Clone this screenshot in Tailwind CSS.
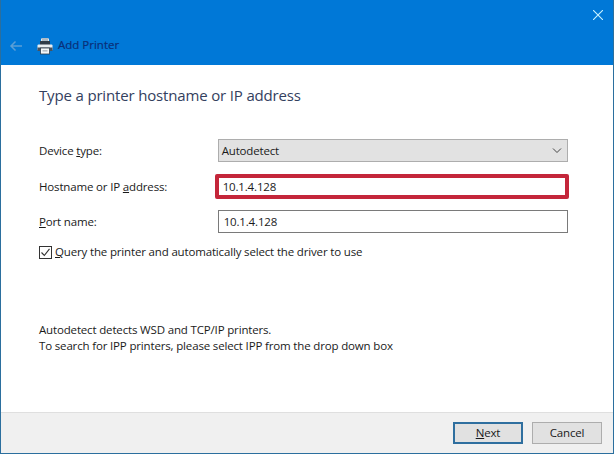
<!DOCTYPE html>
<html>
<head>
<meta charset="utf-8">
<script src="https://cdn.jsdelivr.net/npm/@tailwindcss/browser@4"></script>
</head>
<body class="m-0">
<div class="w-[614px] h-[454px] flex flex-col overflow-hidden bg-white font-['Open_Sans',sans-serif] text-[11.5px] tracking-[-0.16px] text-[#1a1a1a] border-x border-b border-[#2b6f9e]">
  <header class="h-[65px] shrink-0 bg-[#0078d7] relative flex items-end pb-[10px] -mx-px">
    <svg class="ml-[9px] w-[13px] h-[12px] mb-[3px]" viewBox="0 0 13 12" fill="none" stroke="#5b9fd6" stroke-width="1.5"><path d="M13 6H2M6.500 1.500L2 6l4.500 4.500"/></svg>
    <svg class="ml-[15px] w-[16px] h-[17px]" viewBox="0 0 16 17">
      <rect x="4" y="0.500" width="8" height="6" fill="#dfe7ee"/>
      <rect x="5" y="0" width="6" height="3" fill="#aebbc6"/>
      <rect x="3" y="3" width="10" height="4" fill="#2f3b48"/>
      <rect x="0.500" y="6.500" width="15" height="6" rx="1" fill="#e9eef2"/>
      <rect x="0.500" y="9.500" width="15" height="3.500" fill="#47535f"/>
      <rect x="3.500" y="10" width="9" height="6" fill="#f4f7f9" stroke="#2f3b48" stroke-width="0.800"/>
      <rect x="5.500" y="12.500" width="5" height="0.800" fill="#7a8792"/>
    </svg>
    <span class="ml-[5px] mb-[1px] text-[#0a2f78] text-[11.500px] tracking-[0] [-webkit-text-stroke:0.2px_#0a2f78] leading-[18px]">Add Printer</span>
    <svg class="absolute right-[11px] top-[10px] w-[10px] h-[10px]" viewBox="0 0 10 10" stroke="#c8f2ff" stroke-width="1.100"><path d="M0 0L10 10M10 0L0 10"/></svg>
  </header>
  <main class="flex-1 flex flex-col pl-[38px] pr-[45px]">
    <h1 class="mt-[20px] h-[21px] text-[15px] leading-[21px] font-normal text-[#33405e]">Type a printer hostname or IP address</h1>
    <div class="mt-[33px] flex items-center h-[23px]">
      <span class="w-[179px]">Device <u>t</u>ype:</span>
      <div class="w-[351px] h-[23px] flex items-center justify-between pl-[3px] pr-[5px] bg-[#e2e2e2] border border-[#adadad]">
        <span>Autodetect</span>
        <svg class="w-[10px] h-[6px]" viewBox="0 0 10 6" fill="none" stroke="#444" stroke-width="1"><path d="M1 0.500L5 4.500L9 0.500"/></svg>
      </div>
    </div>
    <div class="mt-[13px] flex items-center h-[23px]">
      <span class="w-[179px]">Hostname or IP <u>a</u>ddress:</span>
      <div class="relative w-[351px] h-[23px] flex items-center pl-[5px] bg-white">
        <span>10.1.4.128</span>
        <div class="absolute -left-[3px] -right-px -top-px -bottom-px border-4 border-[#c4263a] rounded-[2px]"></div>
      </div>
    </div>
    <div class="mt-[12px] flex items-center h-[23px]">
      <span class="w-[179px]"><u>P</u>ort name:</span>
      <div class="w-[351px] h-[23px] flex items-center pl-[5px] bg-white border border-[#7a7a7a]">
        <span>10.1.4.128</span>
      </div>
    </div>
    <div class="mt-[11px] flex items-center h-[16px]">
      <div class="w-[13px] h-[13px] bg-white border border-[#333] flex items-center justify-center">
        <svg class="w-[11px] h-[11px]" viewBox="0 0 11 11" fill="none" stroke="#333" stroke-width="1.100"><path d="M1.500 5.500L4.300 8.500L9.500 1.800"/></svg>
      </div>
      <span class="ml-[3px]"><u>Q</u>uery the printer and automatically select the driver to use</span>
    </div>
    <p class="mt-[62px] leading-[16px]">Autodetect detects WSD and TCP/IP printers.<br>To search for IPP printers, please select IPP from the drop down box</p>
  </main>
  <footer class="h-[41px] shrink-0 bg-[#f0f0f0] border-t border-[#dfdfdf] flex justify-end items-start pt-[9px] pr-[11px] gap-[9px]">
    <button class="w-[70px] h-[22px] bg-[#e1e1e1] border-2 border-[#2f6f9f] flex items-center justify-center"><span><u>N</u>ext</span></button>
    <button class="w-[70px] h-[22px] bg-[#e1e1e1] border border-[#adadad] flex items-center justify-center">Cancel</button>
  </footer>
</div>
</body>
</html>
